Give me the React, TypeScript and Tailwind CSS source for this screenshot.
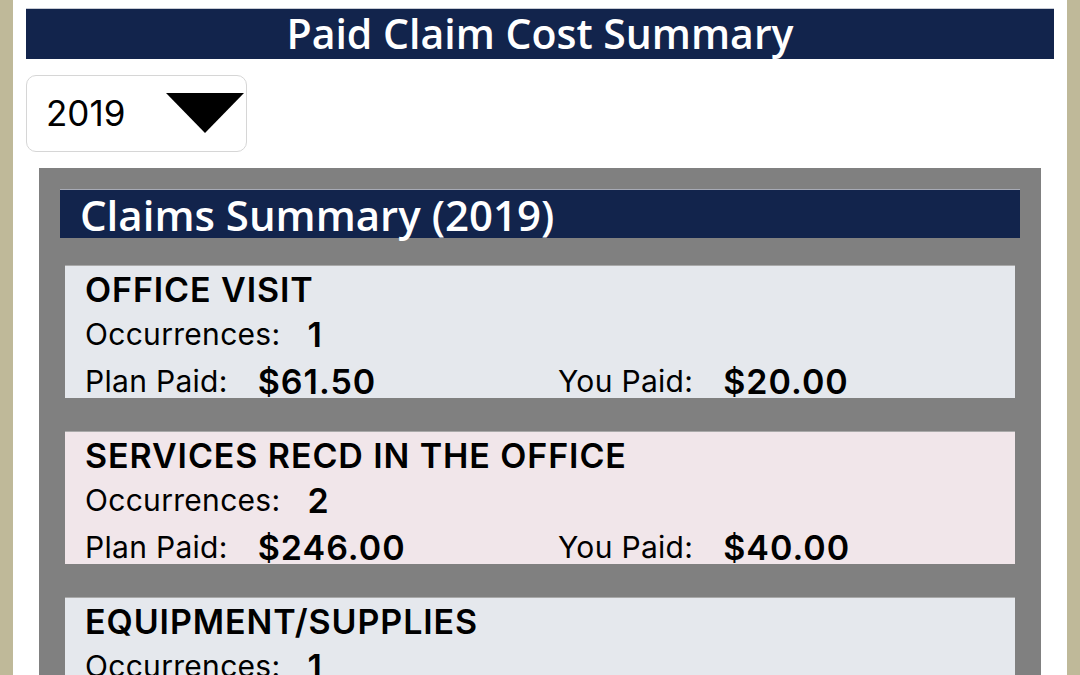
const claims = [
  { name: 'OFFICE VISIT', count: 1, plan: '$61.50', you: '$20.00', tint: 'bg-[#e5e8ed]' },
  { name: 'SERVICES RECD IN THE OFFICE', count: 2, plan: '$246.00', you: '$40.00', tint: 'bg-[#f1e6ea]' },
  { name: 'EQUIPMENT/SUPPLIES', count: 1, plan: '$12.00', you: '$0.00', tint: 'bg-[#e5e8ed]' },
]

function ClaimCard({ c }: { c: (typeof claims)[number] }) {
  return (
    <div className={`${c.tint} border-t border-[#a9a9a9] px-5 text-black`}>
      <div className="flex h-[46px] items-center text-[34px] font-semibold tracking-[0.9px]">{c.name}</div>
      <div className="flex h-[44px] items-center gap-[27px] text-[30px] tracking-[0.3px]">
        <span>Occurrences:</span>
        <span className="text-[34px] font-semibold tracking-[1px]">{c.count}</span>
      </div>
      <div className="grid h-[42px] grid-cols-[473px_1fr] items-center pb-[5px] text-[30px] tracking-[0.3px]">
        <div className="flex items-center gap-[30px]">
          <span>Plan Paid:</span>
          <span className="text-[34px] font-semibold tracking-[1px]">{c.plan}</span>
        </div>
        <div className="flex items-center gap-[30px]">
          <span>You Paid:</span>
          <span className="text-[34px] font-semibold tracking-[1px]">{c.you}</span>
        </div>
      </div>
    </div>
  )
}

export default function App() {
  return (
    <div className="flex h-[675px] w-[1080px] overflow-hidden bg-[#bfb999] px-[13px] font-['Inter','Liberation_Sans',sans-serif]">
      <div className="flex-1 overflow-hidden bg-white pt-2">
        <div className="mx-[13px] flex h-[51px] items-center justify-center border-t border-[#c8cbd4] bg-[#12244c] font-['Open_Sans',sans-serif] text-[41px] font-semibold text-white">
          Paid Claim Cost Summary
        </div>

        <button
          type="button"
          className="mx-[13px] mt-4 flex h-[77px] w-[221px] items-center rounded-[10px] border border-[#d6d6d6] bg-white pl-[19px] text-[35px] text-black"
        >
          <span className="flex-1 text-left">2019</span>
          <svg width="80" height="42" viewBox="0 0 80 42" className="mb-[2px] mr-[1px]">
            <polygon points="1,1 79,1 40,41" fill="#000" />
          </svg>
        </button>

        <div className="mx-[26px] mt-4 bg-[#808080] px-[21px] pt-[21px] pb-10">
          <div className="flex h-[49px] items-center border-t border-[#a7aab5] bg-[#12244c] pl-[20px] font-['Open_Sans',sans-serif] text-[42px] font-semibold text-white">
            Claims Summary (2019)
          </div>
          <div className="mt-[27px] flex flex-col gap-[33px] px-[5px]">
            {claims.map((c) => (
              <ClaimCard key={c.name} c={c} />
            ))}
          </div>
        </div>
      </div>
    </div>
  )
}
